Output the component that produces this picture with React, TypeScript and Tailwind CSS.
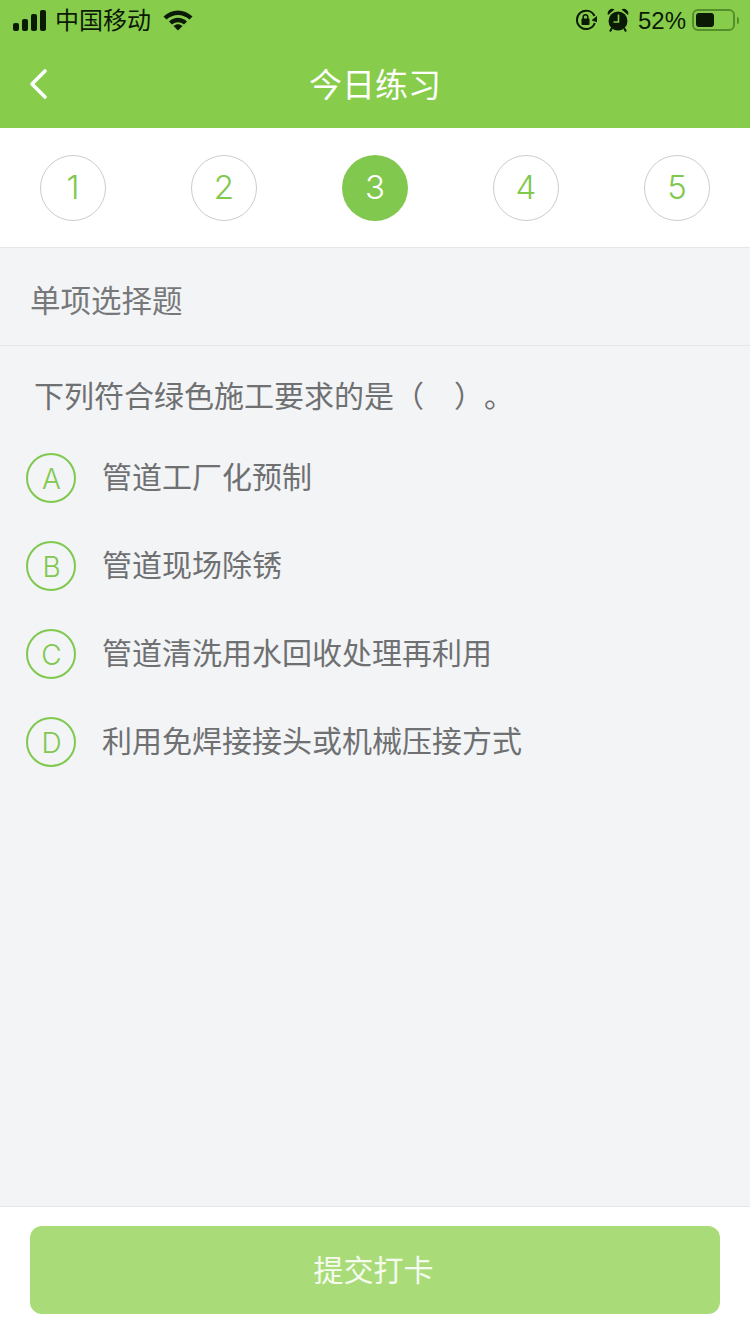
import React from 'react'

const steps = [1, 2, 3, 4, 5]
const options = [
  { key: 'A', text: '管道工厂化预制' },
  { key: 'B', text: '管道现场除锈' },
  { key: 'C', text: '管道清洗用水回收处理再利用' },
  { key: 'D', text: '利用免焊接接头或机械压接方式' },
]

function StatusBar() {
  return (
    <div className="h-10 flex items-center justify-between pl-[13px] pr-[11px] text-[#0b1a05]">
      <div className="flex items-center">
        <div className="flex items-end gap-[3px] h-[21px] w-[33px]">
          <span className="w-[6px] h-[8px] rounded-[2px] bg-[#0b1a05]" />
          <span className="w-[6px] h-[12px] rounded-[2px] bg-[#0b1a05]" />
          <span className="w-[6px] h-[17px] rounded-[2px] bg-[#0b1a05]" />
          <span className="w-[6px] h-[21px] rounded-[2px] bg-[#0b1a05]" />
        </div>
        <span className="ml-[9px] mt-[1px] text-[24px] leading-none">中国移动</span>
        <svg className="ml-[12px] -mt-[1px]" width="30" height="22" viewBox="0 0 30 22">
          <path d="M0.5 7.5 C9 -0.5 21 -0.5 29.5 7.5 L26.5 10.5 C19.5 4.5 10.5 4.5 3.5 10.5 Z" fill="#0b1a05" />
          <path d="M6 12.5 C11.5 7.5 18.5 7.5 24 12.5 L21 15.5 C17 12.5 13 12.5 9 15.5 Z" fill="#0b1a05" />
          <path d="M10.5 17 C13.5 14.5 16.5 14.5 19.5 17 L15 21.5 Z" fill="#0b1a05" />
        </svg>
      </div>
      <div className="flex items-center">
        <svg width="22" height="22" viewBox="0 0 22 22" fill="none" stroke="#0b1a05">
          <path d="M19.5 7 A9.2 9.2 0 1 0 19.8 14" strokeWidth="2" />
          <path d="M21.8 7.5 L17.2 11.2 L22 12.8 Z" fill="#0b1a05" strokeWidth="0.8" />
          <rect x="6.5" y="9.5" width="8" height="6.5" rx="1" fill="#0b1a05" stroke="none" />
          <path d="M8.2 10 V8 A2.3 2.3 0 0 1 12.8 8 V10" strokeWidth="1.5" />
        </svg>
        <svg className="ml-[10px] -mt-[1px]" width="22" height="24" viewBox="0 0 22 24">
          <circle cx="11" cy="13" r="9.5" fill="#0b1a05" />
          <path d="M1 7 A4.5 4.5 0 0 1 7.5 1.5 Z M21 7 A4.5 4.5 0 0 0 14.5 1.5 Z" fill="#0b1a05" />
          <path d="M5 20 L3 23.5 M17 20 L19 23.5" stroke="#0b1a05" strokeWidth="2" />
          <path d="M11.5 6.5 V14 H6.5" fill="none" stroke="#87cd4b" strokeWidth="1.6" />
        </svg>
        <span className="ml-[9px] mt-[1px] text-[24px] leading-none font-['Liberation_Sans',sans-serif]">52%</span>
        <div className="ml-[6px] flex items-center">
          <div className="w-[43px] h-[22px] rounded-[6px] border-2 border-[#548f2b] py-[2px] px-[2px]">
            <div className="w-[18px] h-full rounded-[3px] bg-[#0b1a05]" />
          </div>
          <span className="ml-[2px] w-[2px] h-[7px] rounded-r bg-[#548f2b]" />
        </div>
      </div>
    </div>
  )
}

export default function App() {
  return (
    <div className="w-[750px] h-[1334px] flex flex-col bg-[#f3f4f6] overflow-hidden font-['Liberation_Sans','Noto_Sans_CJK_SC',sans-serif] [text-spacing-trim:space-all]">
      <div className="bg-[#87cd4b]">
        <StatusBar />
        <div className="h-[88px] relative flex items-center justify-center pt-[2px]">
          <svg className="absolute left-[28px] top-[26px]" width="22" height="36" viewBox="0 0 22 36" fill="none">
            <path d="M17 5 L4 18 L17 31" stroke="#fff" strokeWidth="3.6" strokeLinecap="round" strokeLinejoin="round" />
          </svg>
          <span className="text-[33px] leading-none text-white">今日练习</span>
        </div>
      </div>

      <div className="h-[120px] bg-white border-b border-[#e6e6e6] flex items-center justify-between px-[40px]">
        {steps.map(n => (
          <div
            key={n}
            className={
              n === 3
                ? "w-[66px] h-[66px] rounded-full flex items-center justify-center bg-[#80c84e] text-white text-[33px] font-[350] font-['Inter',sans-serif]"
                : "w-[66px] h-[66px] rounded-full flex items-center justify-center border border-[#cccccc] text-[#80c84e] text-[33px] font-[350] font-['Inter',sans-serif]"
            }
          >
            {n}
          </div>
        ))}
      </div>

      <div className="h-[98px] border-b border-[#e6e6e6] flex items-center pl-[30px] pt-[10px]">
        <span className="text-[30.5px] leading-none text-[#77787a]">单项选择题</span>
      </div>

      <div className="flex-1 flex flex-col">
        <p className="mt-[36px] pl-[34px] text-[30px] leading-none text-[#6f7072]">下列符合绿色施工要求的是（　）。</p>
        <div className="mt-[41px] flex flex-col gap-[38px] pl-[26px]">
          {options.map(o => (
            <div key={o.key} className="flex items-center">
              <div className="w-[50px] h-[50px] rounded-full border-2 border-[#80c84e] text-[#80c84e] text-[28px] font-[350] font-['Inter',sans-serif] flex items-center justify-center pl-[1px] pt-[1px]">
                {o.key}
              </div>
              <span className="ml-[26px] text-[30px] leading-none text-[#6f7072]">{o.text}</span>
            </div>
          ))}
        </div>
      </div>

      <div className="h-[128px] bg-white border-t border-[#e6e6e6] px-[30px] pt-[19px]">
        <button type="button" className="w-[690px] h-[88px] rounded-[12px] bg-[#a9dc78] text-[#f6fbf0] text-[30px] pr-[3px]">
          提交打卡
        </button>
      </div>
    </div>
  )
}
